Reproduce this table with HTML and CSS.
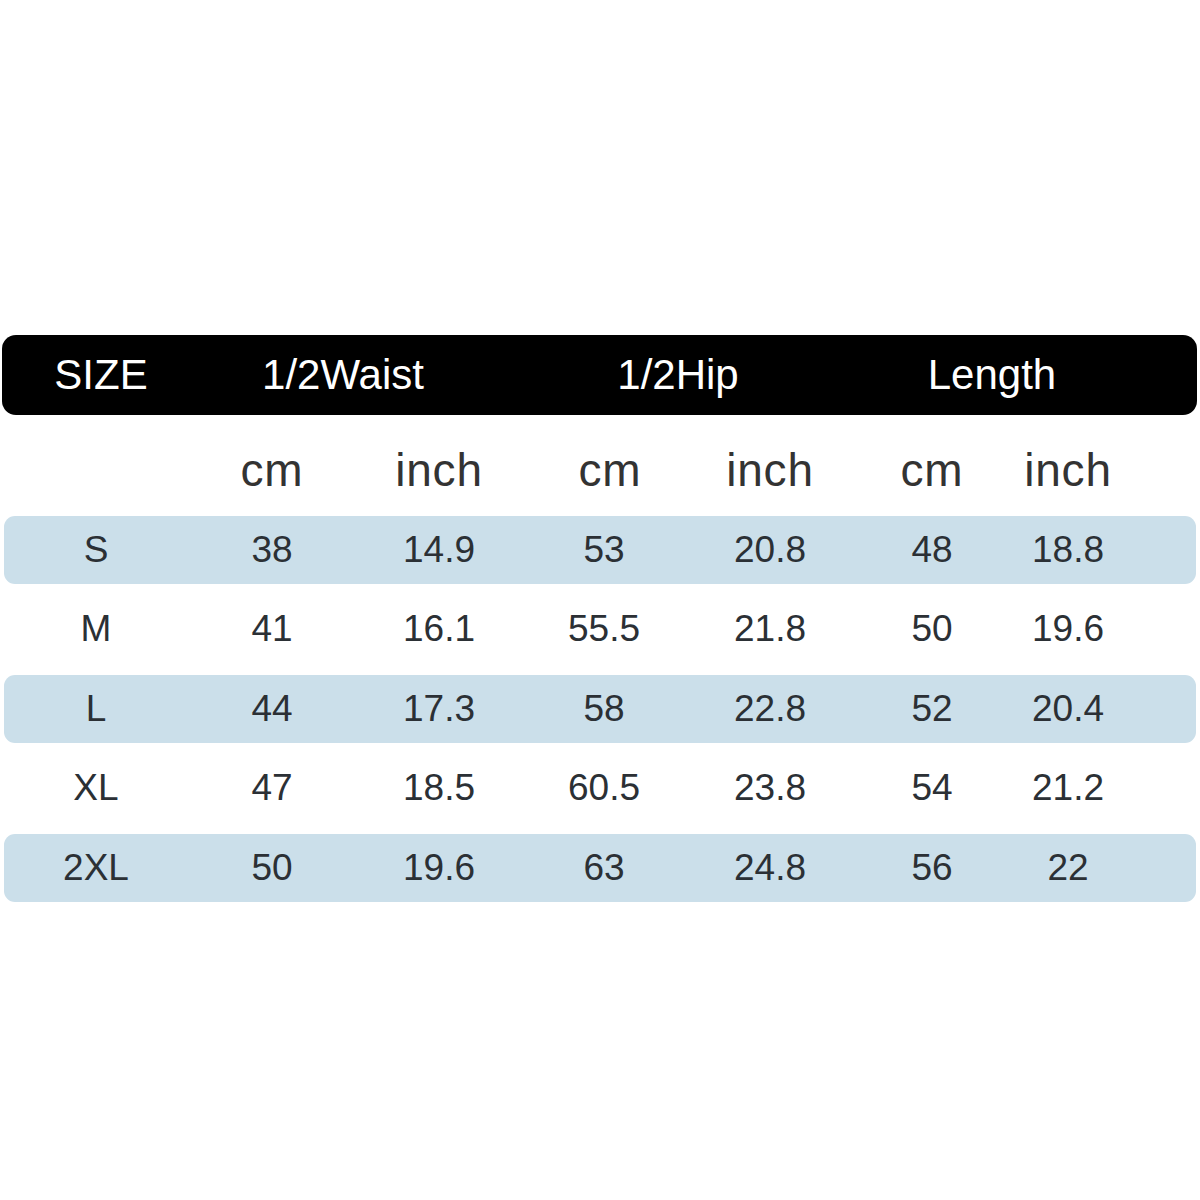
FILE: index.html
```html
<!DOCTYPE html>
<html>
<head>
<meta charset="utf-8">
<link rel="stylesheet" href="styles.css">
</head>
<body>
<div class="chart">
  <div class="head">
    <div class="hc">SIZE</div>
    <div class="hc">1/2Waist</div>
    <div class="hc">1/2Hip</div>
    <div class="hc">Length</div>
  </div>
  <div class="row units">
    <div></div><div>cm</div><div>inch</div><div class="hipcm">cm</div><div>inch</div><div>cm</div><div>inch</div>
  </div>
  <div class="row band">
    <div>S</div><div>38</div><div>14.9</div><div>53</div><div>20.8</div><div>48</div><div>18.8</div>
  </div>
  <div class="row">
    <div>M</div><div>41</div><div>16.1</div><div>55.5</div><div>21.8</div><div>50</div><div>19.6</div>
  </div>
  <div class="row band">
    <div>L</div><div>44</div><div>17.3</div><div>58</div><div>22.8</div><div>52</div><div>20.4</div>
  </div>
  <div class="row">
    <div>XL</div><div>47</div><div>18.5</div><div>60.5</div><div>23.8</div><div>54</div><div>21.2</div>
  </div>
  <div class="row band">
    <div>2XL</div><div>50</div><div>19.6</div><div>63</div><div>24.8</div><div>56</div><div>22</div>
  </div>
</div>
</body>
</html>
```

FILE: styles.css
```css
html, body {
  margin: 0;
  padding: 0;
  background: #ffffff;
}
body {
  width: 1200px;
  height: 1200px;
  font-family: "Liberation Sans", Arial, sans-serif;
}
.chart {
  padding-top: 335px;
  display: flex;
  flex-direction: column;
}
.head {
  margin: 0 3px 0 2px;
  height: 80px;
  background: #000;
  border-radius: 14px;
  display: grid;
  grid-template-columns: 198px 286px 384px 244px 1fr;
  align-items: center;
  color: #fff;
  font-size: 42px;
}
.hc {
  text-align: center;
}
.row {
  margin: 0 4px;
  height: 68px;
  display: grid;
  grid-template-columns: 184px 168px 166px 164px 168px 156px 116px 1fr;
  align-items: center;
  font-size: 37px;
  color: #2b3035;
  margin-top: 11.5px;
  border-radius: 11px;
}
.row > div {
  text-align: center;
}
.units {
  margin-top: 21px;
  font-size: 46px;
  letter-spacing: 0.8px;
  color: #333;
}
.units .hipcm {
  padding-left: 12px;
}
.band {
  background: #cbdfea;
}
```
